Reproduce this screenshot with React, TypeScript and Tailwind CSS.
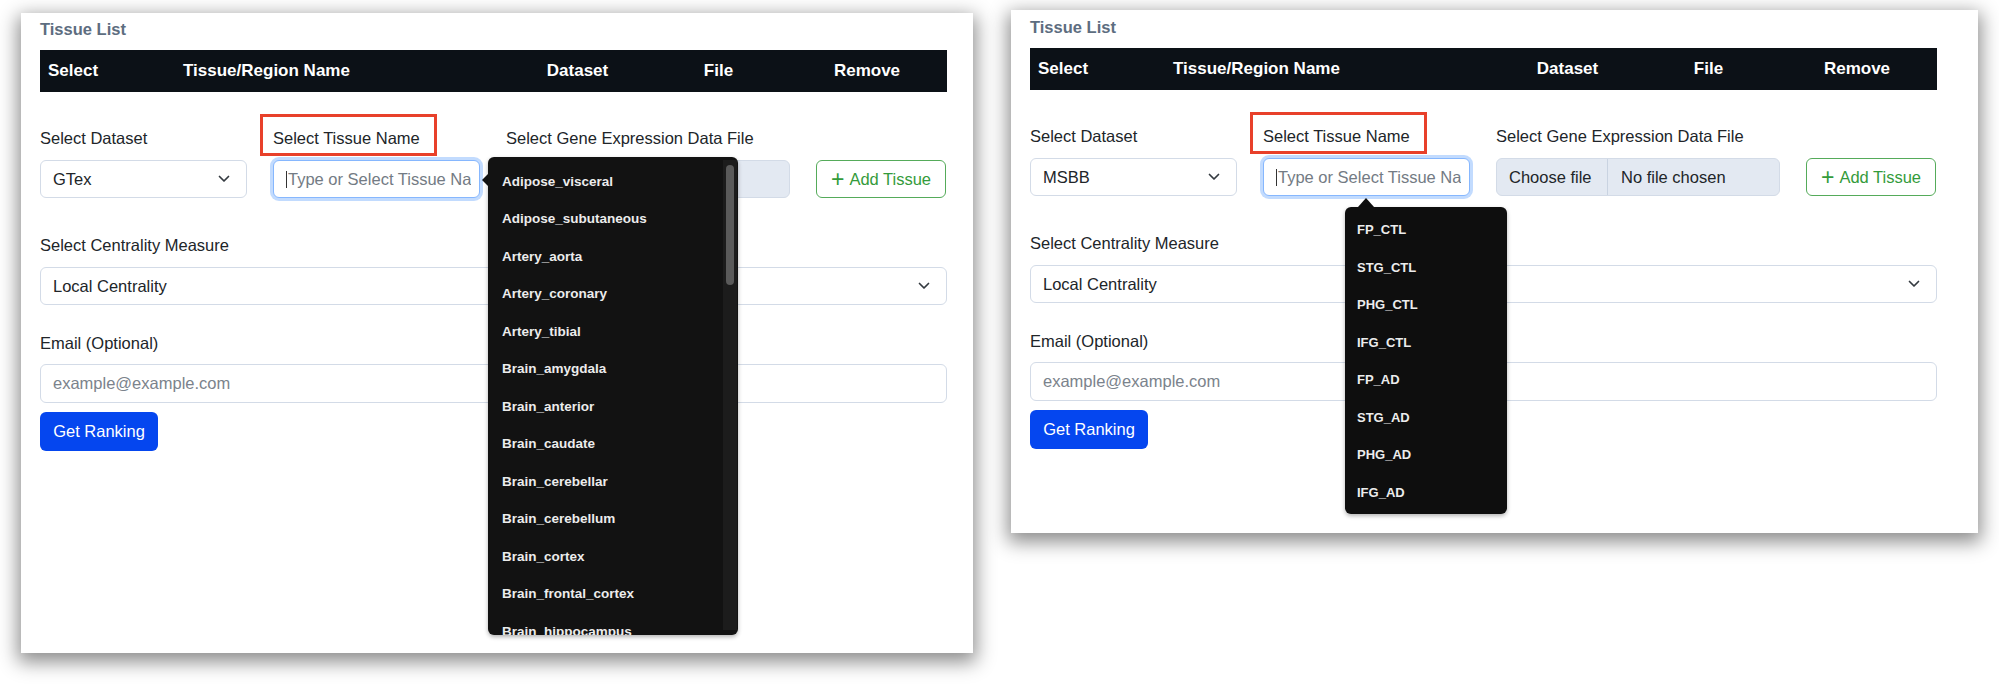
import React from 'react';

const gtexTissues = [
  'Adipose_visceral',
  'Adipose_subutaneous',
  'Artery_aorta',
  'Artery_coronary',
  'Artery_tibial',
  'Brain_amygdala',
  'Brain_anterior',
  'Brain_caudate',
  'Brain_cerebellar',
  'Brain_cerebellum',
  'Brain_cortex',
  'Brain_frontal_cortex',
  'Brain_hippocampus',
];

const msbbRegions = ['FP_CTL', 'STG_CTL', 'PHG_CTL', 'IFG_CTL', 'FP_AD', 'STG_AD', 'PHG_AD', 'IFG_AD'];

const Chevron = () => (
  <svg width="12" height="8" viewBox="0 0 12 8" fill="none" className="shrink-0">
    <path d="M1.5 1.5 L6 6 L10.5 1.5" stroke="#343a40" strokeWidth="1.7" strokeLinecap="round" strokeLinejoin="round" />
  </svg>
);

interface PanelProps {
  dataset: string;
  showFileText: boolean;
  padTop: string;
}

// One "Tissue List" card; the open dropdown is passed in as children
const TissuePanel: React.FC<PanelProps & { children?: React.ReactNode }> = ({ dataset, showFileText, padTop, children }) => {
  return (
    <div className={`relative h-full pl-[19px] ${padTop}`}>
      <div className="text-[16.5px] font-bold leading-[24px] text-[#5d6d80]">Tissue List</div>

      <div className="mt-[9px] grid h-[42px] w-[907px] grid-cols-[135px_320px_165px_117px_170px] items-center bg-[#0c1117] text-[17px] font-bold text-white">
        <div className="pl-[8px]">Select</div>
        <div className="pl-[8px]">Tissue/Region Name</div>
        <div className="text-center">Dataset</div>
        <div className="text-center">File</div>
        <div className="pl-[10px] text-center">Remove</div>
      </div>

      <div className="mt-[34px] grid w-[907px] grid-cols-[207px_207px_284px_130px] gap-x-[26px]">
        <div>
          <div className="mb-[10px] leading-[24px]">Select Dataset</div>
          <div className="flex h-[38px] items-center justify-between rounded-[6px] border border-[#d3dbe7] bg-white pl-[12px] pr-[16px]">
            <span>{dataset}</span>
            <Chevron />
          </div>
        </div>
        <div>
          <div className="relative mb-[10px] leading-[24px]">
            <span>Select Tissue Name</span>
            <div className="absolute left-[-13px] top-[-12px] h-[42px] w-[177px] border-[3px] border-[#e8402a]" />
          </div>
          <div className="flex h-[38px] items-center overflow-hidden whitespace-nowrap rounded-[6px] border border-[#86b7fe] bg-white pl-[12px] pr-[8px] shadow-[0_0_0_3px_rgba(13,110,253,0.25)]">
            <span className="mr-[1px] h-[17px] w-[1px] shrink-0 bg-[#333]" />
            <span className="overflow-hidden text-[#737b84]">Type or Select Tissue Name</span>
          </div>
        </div>
        <div>
          <div className="mb-[10px] whitespace-nowrap leading-[24px]">Select Gene Expression Data File</div>
          <div className="flex h-[38px] items-stretch rounded-[6px] border border-[#d3dbe7] bg-[#e3e9f2]">
            <div className="flex w-[111px] items-center border-r border-[#c9d3e1] pl-[12px]">
              {showFileText && <span>Choose file</span>}
            </div>
            <div className="flex items-center pl-[13px]">{showFileText && <span>No file chosen</span>}</div>
          </div>
        </div>
        <div className="flex flex-col">
          <div className="mb-[10px] h-[24px]" />
          <button className="flex h-[38px] items-center justify-center gap-[5px] rounded-[6px] border border-[#55ab5a] bg-white text-[#349b3b]">
            <span className="text-[23px] font-light leading-none">+</span>
            <span>Add Tissue</span>
          </button>
        </div>
      </div>

      <div className="mt-[35px] w-[907px]">
        <div className="mb-[10px] leading-[24px]">Select Centrality Measure</div>
        <div className="flex h-[38px] items-center justify-between rounded-[6px] border border-[#d3dbe7] bg-white pl-[12px] pr-[16px]">
          <span>Local Centrality</span>
          <Chevron />
        </div>
      </div>

      <div className="mt-[26px] w-[907px]">
        <div className="mb-[9px] leading-[24px]">Email (Optional)</div>
        <div className="flex h-[39px] items-center rounded-[6px] border border-[#d3dbe7] bg-white pl-[12px] text-[#7b838c]">
          example@example.com
        </div>
      </div>

      <button className="mt-[9px] flex h-[39px] w-[118px] items-center justify-center whitespace-nowrap rounded-[6px] bg-[#0546ef] text-white">
        Get Ranking
      </button>

      {children}
    </div>
  );
};

export default function App() {
  return (
    <div
      className="flex h-[686px] w-[1999px] items-start overflow-hidden bg-white text-[16.5px] text-[#212529]"
      style={{ fontFamily: '"Liberation Sans", Arial, sans-serif' }}
    >
      {/* GTex panel */}
      <div className="ml-[21px] mt-[13px] h-[640px] w-[952px] bg-white shadow-[0_6px_18px_3px_rgba(0,0,0,0.45)]">
        <TissuePanel dataset="GTex" showFileText={false} padTop="pt-[4px]">
          <div className="absolute left-[461px] top-[160px] h-0 w-0 border-y-[7px] border-r-[7px] border-y-transparent border-r-[#121212]" />
          <div className="absolute left-[467px] top-[144px] h-[478px] w-[250px] overflow-hidden rounded-[6px] bg-[#121212] shadow-[0_2px_4px_rgba(0,0,0,0.3)]">
            <div className="pt-[6px]">
              {gtexTissues.map(t => (
                <div key={t} className="flex h-[37.5px] items-center pl-[14px] text-[13.5px] font-bold text-[#ececec]">
                  {t}
                </div>
              ))}
            </div>
            <div className="absolute bottom-[5px] right-[1px] top-[3px] w-[14px] bg-[#1c1c1c]">
              <div className="mx-auto mt-[5px] h-[120px] w-[8px] rounded-full bg-[#5a5a5a]" />
            </div>
          </div>
        </TissuePanel>
      </div>

      {/* MSBB panel */}
      <div className="ml-[38px] mt-[10px] h-[523px] w-[967px] bg-white shadow-[0_6px_18px_3px_rgba(0,0,0,0.45)]">
        <TissuePanel dataset="MSBB" showFileText={true} padTop="pt-[5px]">
          <div className="absolute left-[347px] top-[188px] h-0 w-0 border-x-[8px] border-b-[9px] border-x-transparent border-b-[#0e0e0e]" />
          <div className="absolute left-[334px] top-[197px] h-[307px] w-[162px] overflow-hidden rounded-[6px] bg-[#0e0e0e] pt-[4px] shadow-[0_2px_4px_rgba(0,0,0,0.3)]">
            {msbbRegions.map(r => (
              <div key={r} className="flex h-[37.5px] items-center pl-[12px] text-[13px] font-bold text-[#ececec]">
                {r}
              </div>
            ))}
          </div>
        </TissuePanel>
      </div>
    </div>
  );
}
